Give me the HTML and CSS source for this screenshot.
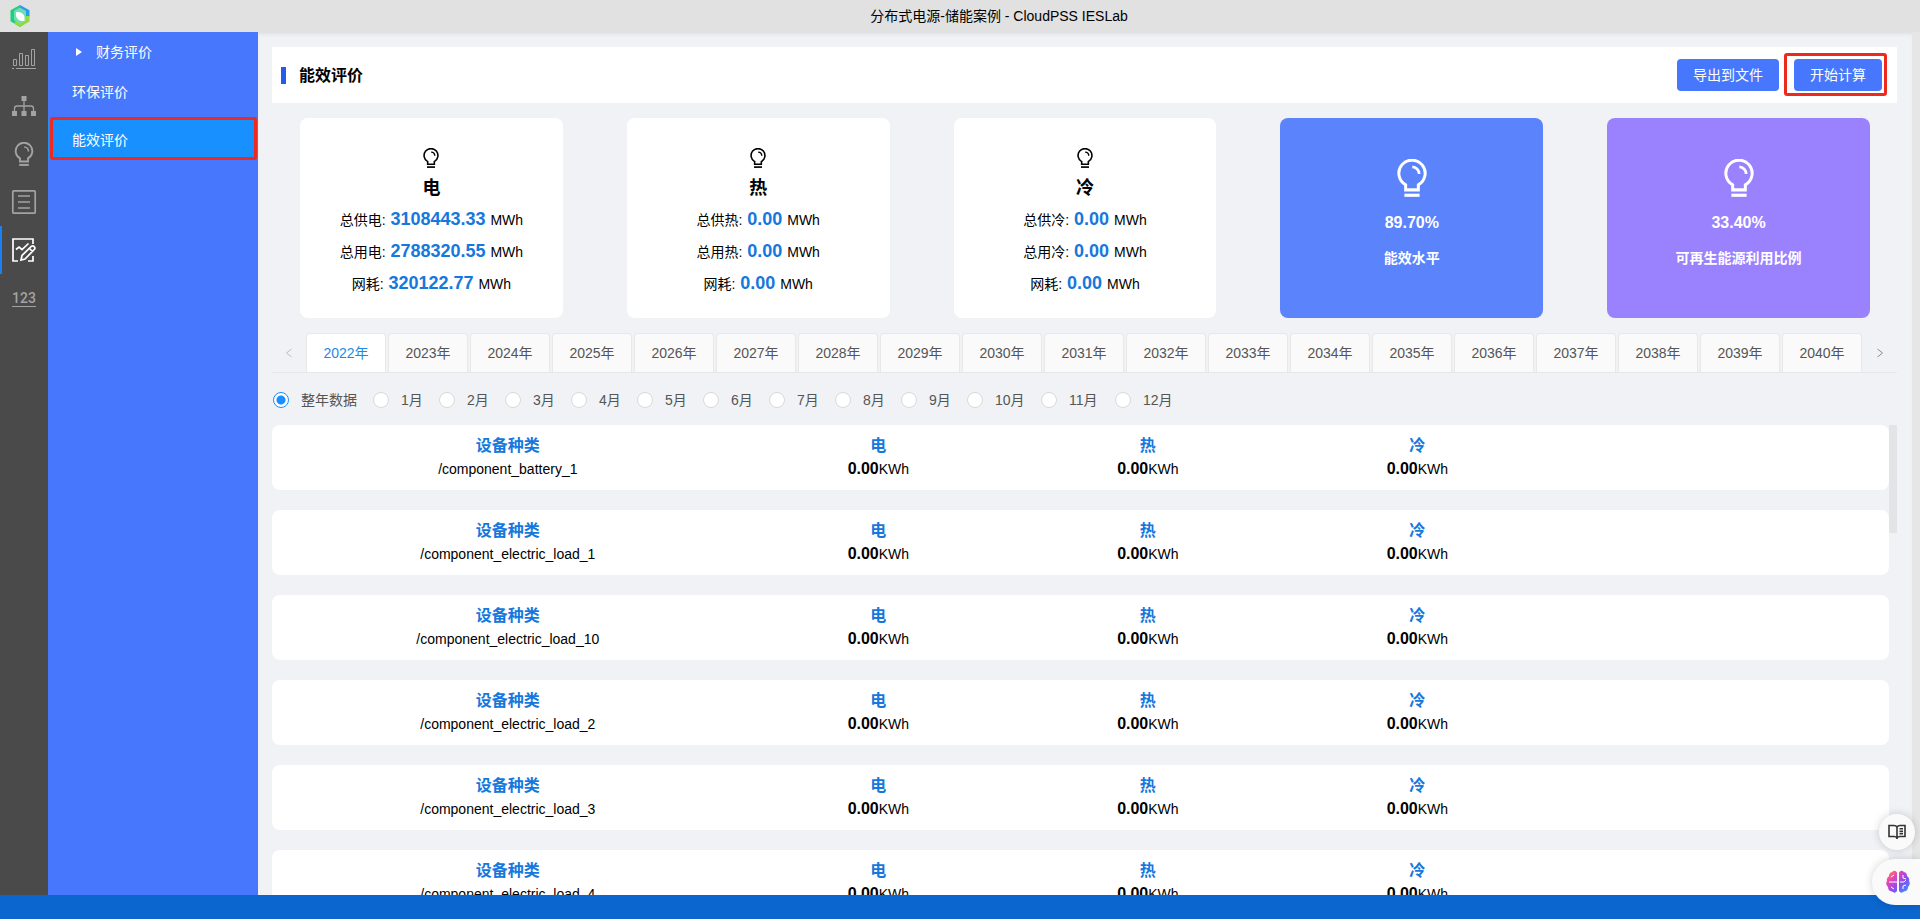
FILE: index.html
```html
<!DOCTYPE html>
<html lang="zh-CN">
<head>
<meta charset="utf-8">
<title>分布式电源-储能案例 - CloudPSS IESLab</title>
<link rel="stylesheet" href="styles.css">
</head>
<body>
<svg class="defs" aria-hidden="true">
  <symbol id="bulb" viewBox="0 0 20 24">
    <path d="M6 19.500v-3.200A8.300 8.300 0 1 1 14 16.300V19.500Z" fill="none" stroke="currentColor" stroke-width="1.900"/>
    <path d="M10.200 5A4.400 4.400 0 0 1 14.500 9.400" fill="none" stroke="currentColor" stroke-width="1.700"/>
    <path d="M5.200 22.900h9.600" stroke="currentColor" stroke-width="2"/>
  </symbol>
</svg>

<header class="topbar">
  <svg class="logo" viewBox="0 0 22 24">
    <path d="M11 1 1.500 6.200v11L11 23l3-2-8-5V9l5-4Z" fill="#1fd07a"/>
    <path d="M11 1l9.500 5.200v6L16 14V9l-5-4Z" fill="#2a9be8"/>
    <path d="M20.500 12v5.600L11 23l-6-3.500 3-4 4 2 4-2.500V12Z" fill="#8fdc3c"/>
    <path d="M6 6l5-2.500 6 3.500v9l-6 3.500L5 16V7Z" fill="#6fdcb8"/>
    <path d="M7 8c4-.5 8.500 1.500 8.500 5.500V17C10 18 6 14 7 8Z" fill="#fff"/>
  </svg>
  <h1 class="topbar-title">分布式电源-储能案例 - CloudPSS IESLab</h1>
</header>

<div class="body">
  <nav class="rail">
    <button class="rail-item" aria-label="图表"><svg viewBox="0 0 24 24" fill="none" stroke="currentColor"><path d="M1.500 13.500h3v6h-3zM7.500 7.500h3v12h-3zM13.500 9.500h3v10h-3zM19.500 3.500h3v16h-3zM0 22.500h2M4 22.500h20"/></svg></button>
    <button class="rail-item" aria-label="拓扑"><svg viewBox="0 0 24 24"><path d="M9.500 2h5v5h-5zM0 17h5v5H0zM9.500 17h5v5h-5zM19 17h5v5h-5z" fill="currentColor"/><path d="M12 6v12M2.500 18v-3.500q0-2.500 2.500-2.500h14q2.500 0 2.500 2.500V18" fill="none" stroke="currentColor" stroke-width="1.300"/></svg></button>
    <button class="rail-item" aria-label="能源"><svg viewBox="0 0 20 24"><use href="#bulb"/></svg></button>
    <button class="rail-item" aria-label="列表"><svg viewBox="0 0 24 24" fill="none" stroke="currentColor" stroke-width="1.700"><rect x=".8" y=".8" width="22.400" height="22.400" rx="1"/><path d="M6 6h12M6 12h12M6 18h12"/></svg></button>
    <button class="rail-item is-active" aria-label="评价"><svg viewBox="0 0 24 24" fill="none" stroke="currentColor" stroke-width="1.700"><path d="M21 6V1H1v22h5M16 23h5v-5M4 11.500l3-2.500 3 2.500 6.500-6M9 22l1-4.500L19.500 8.200q1.500-.8 2.700.4t.3 2.700L13 21ZM17.500 10.500l3 3"/></svg></button>
    <button class="rail-item rail-num">123</button>
  </nav>

  <aside class="side">
    <a class="side-item side-parent" href="#"><svg class="caret" viewBox="0 0 6 8"><path d="M0 0l6 4-6 4Z" fill="#fff"/></svg>财务评价</a>
    <a class="side-item" href="#">环保评价</a>
    <a class="side-item side-current" href="#">能效评价</a>
  </aside>

  <main class="main">
    <section class="head">
      <h2 class="head-title">能效评价</h2>
      <div class="head-actions">
        <button class="btn">导出到文件</button>
        <button class="btn btn-marked">开始计算</button>
      </div>
    </section>

    <section class="cards">
      <article class="card">
        <svg class="card-icon"><use href="#bulb"/></svg>
        <h3>电</h3>
        <p>总供电: <b>3108443.33</b> MWh</p><p>总用电: <b>2788320.55</b> MWh</p><p>网耗: <b>320122.77</b> MWh</p>
      </article>
      <article class="card">
        <svg class="card-icon"><use href="#bulb"/></svg>
        <h3>热</h3>
        <p>总供热: <b>0.00</b> MWh</p><p>总用热: <b>0.00</b> MWh</p><p>网耗: <b>0.00</b> MWh</p>
      </article>
      <article class="card">
        <svg class="card-icon"><use href="#bulb"/></svg>
        <h3>冷</h3>
        <p>总供冷: <b>0.00</b> MWh</p><p>总用冷: <b>0.00</b> MWh</p><p>网耗: <b>0.00</b> MWh</p>
      </article>
      <article class="card card-solid card-blue">
        <svg class="card-icon"><use href="#bulb"/></svg>
        <strong>89.70%</strong><h3>能效水平</h3>
      </article>
      <article class="card card-solid card-purple">
        <svg class="card-icon"><use href="#bulb"/></svg>
        <strong>33.40%</strong><h3>可再生能源利用比例</h3>
      </article>
    </section>

    <div class="years">
      <button class="arrow arrow-off" aria-label="向前"><svg viewBox="0 0 8 10"><path d="M6.500 1l-5 4 5 4" fill="none" stroke="currentColor"/></svg></button>
      <div class="tabs" role="tablist" id="tabs"></div>
      <button class="arrow" aria-label="向后"><svg viewBox="0 0 8 10"><path d="M1.500 1l5 4-5 4" fill="none" stroke="currentColor"/></svg></button>
    </div>

    <div class="months" id="months"></div>
    <div class="list">
      <div class="rows" id="rows"></div>
      <div class="track"><div class="thumb"></div></div>
    </div>
  </main>
</div>
<footer class="footer"></footer>

<button class="float float-book" aria-label="文档"><svg viewBox="0 0 18 16" fill="none" stroke="#333" stroke-width="1.600"><path d="M9 3Q8 1.500 6 1.500H1v11h5.500Q8.500 12.500 9 14.500q.5-2 2.500-2H17v-11h-5Q10 1.500 9 3v12M11.500 4.800h3.500M11.500 7.200h3.500M11.500 9.600h3.500"/></svg></button>
<button class="float float-ai" aria-label="智能助手"><svg viewBox="0 0 24 24">
  <defs><linearGradient id="g" x1="0" y1="0" x2="1" y2="1"><stop offset="0" stop-color="#ff9a2e"/><stop offset=".3" stop-color="#e944b4"/><stop offset=".6" stop-color="#8b4df0"/><stop offset="1" stop-color="#1fa2ff"/></linearGradient></defs>
  <path d="M11 2.500Q9-.5 6 2 3 2.500 3 6 0 8 1 11q-2 3 1 6 0 4 4 4.500 3 2.500 5-.5ZM13 2.500Q15-.5 18 2q3 .5 3 4 3 2 2 5 2 3-1 6 0 4-4 4.500-3 2.500-5-.5Z" fill="url(#g)"/>
  <path d="M3 12h8M5 7l3-2M5 17l3 2M17 5v3l3 1M14 12h4l2-2M17 19v-3l3-1" fill="none" stroke="#fff"/></svg></button>
<script src="app.js"></script>
</body>
</html>
```
FILE: styles.css
```css
* { box-sizing: border-box; }
body {
  margin: 0;
  height: 100vh;
  display: flex;
  flex-direction: column;
  overflow: hidden;
  font: 14px/22px "Liberation Sans", "Noto Sans CJK SC", sans-serif;
  color: #000;
}
h1, h2, h3, p { margin: 0; }
button { font: inherit; border: 0; padding: 0; background: none; cursor: pointer; }
.defs { position: absolute; width: 0; height: 0; }

.topbar {
  flex: none;
  height: 32px;
  display: flex;
  align-items: center;
  padding-left: 8px;
  background: #e1e1e1;
}
.logo { width: 24px; height: 24px; }
.topbar-title { flex: 1; padding-left: 46px; text-align: center; font-size: 14px; font-weight: 400; }

.body { flex: 1; min-height: 0; display: flex; }
.rail { flex: none; width: 48px; padding-top: 2px; background: #4a4a4a; }
.rail-item {
  display: flex;
  align-items: center;
  justify-content: center;
  width: 48px;
  height: 48px;
  color: #a3a3a3;
}
.rail-item svg { width: 24px; height: 24px; overflow: visible; }
.rail-item.is-active { color: #fff; box-shadow: inset 2px 0 #1a80f5; }
.rail-num { font: 500 14px/16px Roboto, sans-serif; text-decoration: underline; text-underline-offset: 3px; }

.side { flex: none; width: 210px; background: #4777fc; }
.side-item {
  display: flex;
  align-items: center;
  height: 40px;
  padding-left: 24px;
  color: #fff;
  text-decoration: none;
}
.side-parent { padding-left: 28px; gap: 14px; }
.caret { width: 6px; height: 8px; }
.side-current { position: relative; margin-top: 8px; background: #1890ff; }
.side-current::after, .btn-marked::after {
  content: "";
  position: absolute;
  border: 3px solid #ed2a20;
  border-radius: 3px;
}
.side-current::after { inset: -3px 1px 0 2px; }

.main {
  flex: 1;
  min-width: 0;
  display: flex;
  flex-direction: column;
  padding: 15px 15px 0 14px;
  background: #f0f2f5;
  border-right: 8px solid #e6e6e6;
  box-shadow: inset 0 4px 4px -3px #d5d6d8;
}
.head {
  flex: none;
  display: flex;
  align-items: center;
  justify-content: space-between;
  height: 56px;
  padding: 0 15px 0 9px;
  background: #fff;
}
.head-title { padding-left: 13px; font-size: 16px; line-height: 17px; border-left: 5px solid #2759ea; }
.head-actions { display: flex; gap: 15px; }
.btn { position: relative; height: 32px; padding: 0 16px; color: #fff; background: #4777fc; border-radius: 4px; }
.btn-marked::after { inset: -6px -5px -5px -10px; }

.cards {
  flex: none;
  display: grid;
  grid-template-columns: repeat(5, 1fr);
  gap: 64px;
  padding: 15px 27px 0 28px;
}
.card {
  display: flex;
  flex-direction: column;
  align-items: center;
  height: 200px;
  padding-top: 30px;
  background: #fff;
  border-radius: 8px;
}
.card-icon { width: 18px; height: 20px; }
.card h3 { margin: 6px 0 2px; font-size: 18px; line-height: 28px; }
.card p { height: 32px; line-height: 32px; }
.card p b { margin: 0 1px; font-size: 18px; line-height: 18px; color: #1677dd; }
.card-solid { padding-top: 41px; color: #fff; }
.card-solid .card-icon { width: 32px; height: 38px; }
.card-solid strong { margin-top: 15px; font-size: 16px; }
.card-solid h3 { margin-top: 13px; font-size: 14px; line-height: 22px; }
.card-blue { background: #5a83fc; }
.card-purple { background: #9a82ff; }

.years {
  flex: none;
  display: flex;
  height: 40px;
  margin-top: 15px;
  border-bottom: 1px solid #e6e7ea;
}
.arrow { flex: none; width: 34px; display: flex; align-items: center; justify-content: center; color: #8c8c8c; }
.arrow-off { color: #bfbfbf; }
.arrow svg { width: 8px; height: 10px; }
.tabs { flex: 1; min-width: 0; display: flex; gap: 2px; overflow: hidden; }
.tab {
  flex: none;
  width: 80px;
  color: #555;
  background: #fafafa;
  border: 1px solid #e8e8e8;
  border-bottom: 0;
  border-radius: 4px 4px 0 0;
}
.tab[aria-selected="true"] { color: #1e88e5; background: #fff; }

.months { flex: none; display: flex; gap: 16px; padding: 16px 0 0 1px; color: #555; }
.months label { display: flex; align-items: center; gap: 12px; min-width: 50px; }
.months .two-digit { min-width: 58px; }
.months input {
  appearance: none;
  width: 16px;
  height: 16px;
  margin: 0;
  background: #fff;
  border: 1px solid #d9d9d9;
  border-radius: 50%;
}
.months input:checked { border-color: #1890ff; background: radial-gradient(circle, #1890ff 4px, #fff 5px); }

.list { flex: 1; min-height: 0; display: flex; margin-top: 14px; overflow: hidden; }
.rows { flex: 1; display: flex; flex-direction: column; gap: 20px; }
.track { flex: none; width: 8px; }
.thumb { height: 108px; background: #e3e4e6; }
.row {
  flex: none;
  display: grid;
  grid-template-columns: 7fr 4fr 4fr 4fr 5fr;
  height: 65px;
  padding-top: 9px;
  text-align: center;
  background: #fff;
  border-radius: 8px;
}
.row h4 { margin: 0; font-size: 16px; line-height: 24px; color: #1677dd; }
.row b { font-size: 16px; }

.footer { flex: none; height: 24px; background: #0b66d0; }

.float {
  position: fixed;
  right: 0;
  display: flex;
  align-items: center;
  background: #fafafa;
  box-shadow: 0 0 8px rgba(0, 0, 0, .18);
}
.float-book { right: 5px; bottom: 69px; width: 36px; height: 36px; justify-content: center; border-radius: 50%; }
.float-book svg { width: 18px; height: 16px; }
.float-ai { bottom: 14px; width: 48px; height: 46px; padding-left: 14px; border-radius: 23px 0 0 23px; }
.float-ai svg { width: 24px; height: 24px; }
```
FILE: app.js
```js
const tabs = document.getElementById('tabs');
for (let year = 2022; year <= 2041; year++) {
  const on = year === 2022;
  tabs.insertAdjacentHTML('beforeend',
    `<button class="tab" role="tab" aria-selected="${on}">${year <= 2040 ? year + '年' : ''}</button>`);
}

const months = document.getElementById('months');
['整年数据', ...Array.from({ length: 12 }, (_, i) => `${i + 1}月`)].forEach((name, i) => {
  months.insertAdjacentHTML('beforeend',
    `<label class="${i > 9 ? 'two-digit' : ''}"><input type="radio" name="month"${i ? '' : ' checked'}>${name}</label>`);
});

const devices = ['battery_1', 'electric_load_1', 'electric_load_10', 'electric_load_2', 'electric_load_3',
  'electric_load_4'];
const rows = document.getElementById('rows');
for (const id of devices) {
  const cells = ['电', '热', '冷'].map(k => `<div><h4>${k}</h4><b>0.00</b>KWh</div>`).join('');
  rows.insertAdjacentHTML('beforeend',
    `<article class="row"><div><h4>设备种类</h4>/component_${id}</div>${cells}</article>`);
}
```
